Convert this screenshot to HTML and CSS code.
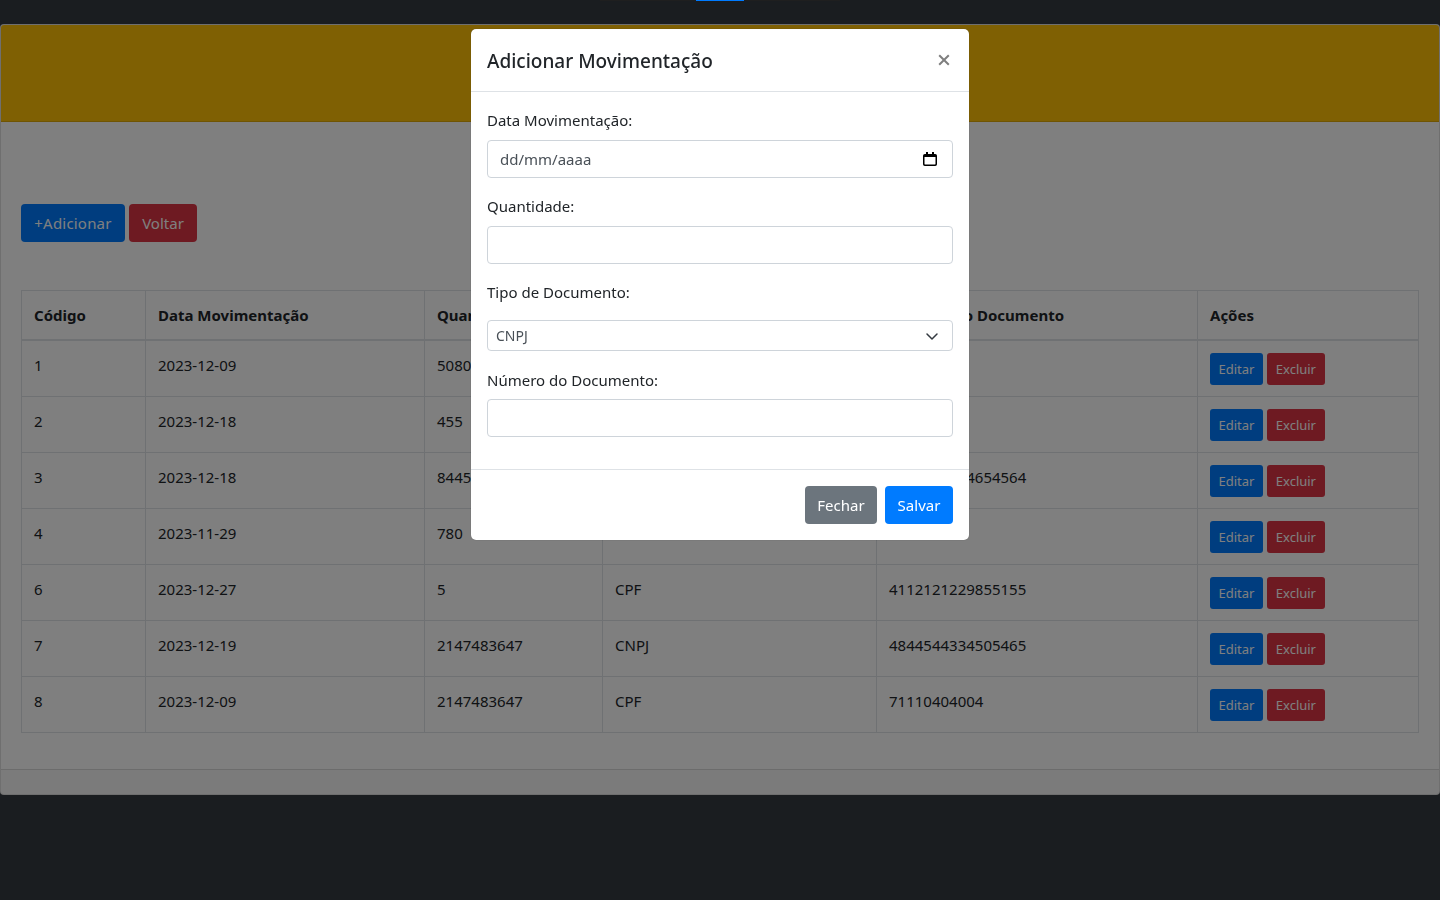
FILE: index.html
```html
<!DOCTYPE html>
<html lang="pt-BR">
<head>
<meta charset="utf-8">
<title>Movimentações</title>
<link rel="stylesheet" href="styles.css">
</head>
<body>
<div class="topbar">
  <div class="pager"><span class="pg"></span><span class="pg gap"></span><span class="pg end"></span></div>
</div>
<main class="card">
  <header class="card-header"></header>
  <section class="card-body">
    <div class="actions">
      <a class="btn blue">+Adicionar</a>
      <a class="btn red">Voltar</a>
    </div>
    <table class="grid">
      <colgroup>
        <col class="c1"><col class="c2"><col class="c3"><col class="c4"><col class="c5"><col class="c6">
      </colgroup>
      <thead>
        <tr><th>Código</th><th>Data Movimentação</th><th>Quantidade</th><th>Tipo de Documento</th><th>Número do Documento</th><th>Ações</th></tr>
      </thead>
      <tbody>
        <tr><td>1</td><td>2023-12-09</td><td>5080</td><td>CPF</td><td>1234</td><td><span class="sm blue">Editar</span> <span class="sm red">Excluir</span></td></tr>
        <tr><td>2</td><td>2023-12-18</td><td>455</td><td>CPF</td><td>4545</td><td><span class="sm blue">Editar</span> <span class="sm red">Excluir</span></td></tr>
        <tr><td>3</td><td>2023-12-18</td><td>8445</td><td>CNPJ</td><td>4654654654654564</td><td><span class="sm blue">Editar</span> <span class="sm red">Excluir</span></td></tr>
        <tr><td>4</td><td>2023-11-29</td><td>780</td><td>CPF</td><td>7805</td><td><span class="sm blue">Editar</span> <span class="sm red">Excluir</span></td></tr>
        <tr><td>6</td><td>2023-12-27</td><td>5</td><td>CPF</td><td>4112121229855155</td><td><span class="sm blue">Editar</span> <span class="sm red">Excluir</span></td></tr>
        <tr><td>7</td><td>2023-12-19</td><td>2147483647</td><td>CNPJ</td><td>4844544334505465</td><td><span class="sm blue">Editar</span> <span class="sm red">Excluir</span></td></tr>
        <tr><td>8</td><td>2023-12-09</td><td>2147483647</td><td>CPF</td><td>71110404004</td><td><span class="sm blue">Editar</span> <span class="sm red">Excluir</span></td></tr>
      </tbody>
    </table>
  </section>
  <footer class="card-footer"></footer>
</main>

<div class="backdrop"></div>
<div class="active-tab"></div>

<div class="modal">
  <div class="modal-header">
    <h5 class="modal-title">Adicionar Movimentação</h5>
    <svg class="close" width="12" height="12" viewBox="0 0 12 12" aria-label="Fechar">
      <path d="M1.2 1.2l9.6 9.6M10.8 1.2l-9.6 9.6" fill="none" stroke="#7f7f7f" stroke-width="2"/>
    </svg>
  </div>
  <div class="modal-body">
    <div class="field">
      <label class="lbl">Data Movimentação:</label>
      <div class="control date">
        <span>dd/mm/aaaa</span>
        <svg class="cal" width="14" height="14" viewBox="0 0 14 14" aria-hidden="true">
          <path d="M3 0h2v2h4V0h2v2h1.2A1.8 1.8 0 0 1 14 3.8v8.4a1.8 1.8 0 0 1-1.8 1.8H1.8A1.8 1.8 0 0 1 0 12.2V3.8A1.8 1.8 0 0 1 1.8 2H3z M1.5 5v7c0 .3.2.5.5.5h10c.3 0 .5-.2.5-.5V5z" fill="#000" fill-rule="evenodd"/>
        </svg>
      </div>
    </div>
    <div class="field">
      <label class="lbl">Quantidade:</label>
      <div class="control"></div>
    </div>
    <div class="field tipo">
      <label class="lbl">Tipo de Documento:</label>
      <div class="control select">
        <span>CNPJ</span>
        <svg width="16" height="16" viewBox="0 0 16 16" aria-hidden="true">
          <path d="M3 6l5 5 5-5" fill="none" stroke="#343a40" stroke-width="1.5" stroke-linecap="round" stroke-linejoin="round"/>
        </svg>
      </div>
    </div>
    <div class="field numero">
      <label class="lbl">Número do Documento:</label>
      <div class="control"></div>
    </div>
  </div>
  <div class="modal-footer">
    <a class="btn gray">Fechar</a>
    <a class="btn primary">Salvar</a>
  </div>
</div>
</body>
</html>
```
FILE: styles.css
```css
* { box-sizing: border-box; }

html, body { margin: 0; height: 100%; }

body {
  background: #343a40;
  color: #212529;
  font-family: "Noto Sans", "Open Sans", sans-serif;
  font-size: 15px;
  line-height: 24px;
  overflow: hidden;
}

.topbar { height: 24px; display: flex; justify-content: center; }
.pager { display: flex; height: 1px; width: 240px; }
.pg { flex: 0 0 96px; background: #3f3f3f; }
.pg.gap { flex: 0 0 48px; background: none; }
.pg.end { flex: 1 1 auto; }

.card {
  height: 771px;
  display: flex;
  flex-direction: column;
  background: #fff;
  border: 1px solid rgba(0,0,0,.125);
  border-radius: 4px;
}
.card-header { height: 97px; flex: none; background: #ffc107; border-bottom: 1px solid rgba(0,0,0,.125); border-radius: 3px 3px 0 0; }
.card-body { flex: 1 1 auto; padding: 82px 20px 0; }
.card-footer { height: 25px; flex: none; background: rgba(0,0,0,.03); border-top: 1px solid rgba(0,0,0,.125); border-radius: 0 0 3px 3px; }

.actions { display: flex; gap: 4px; height: 38px; margin-bottom: 48px; }

.btn {
  display: flex;
  align-items: center;
  justify-content: center;
  height: 38px;
  padding: 0 13px;
  border-radius: 4px;
  color: #fff;
}
.btn.blue, .sm.blue { background: #007bff; }
.btn.red, .sm.red { background: #dc3545; }
.btn.gray { background: #6c757d; width: 72px; padding: 0; }
.btn.primary { background: #007bff; width: 68px; padding: 0; }
.actions .blue { width: 104px; padding: 0 0 1px; letter-spacing: .2px; }
.actions .red { width: 68px; padding: 0 0 1px; }

.grid {
  width: 1397px;
  border-collapse: collapse;
  table-layout: fixed;
}
.c1 { width: 124px; }
.c2 { width: 279px; }
.c3 { width: 178px; }
.c4 { width: 274px; }
.c5 { width: 321px; }
.c6 { width: 221px; }

.grid th, .grid td {
  border: 1px solid #dee2e6;
  padding: 12px;
  text-align: left;
  vertical-align: top;
  white-space: nowrap;
  overflow: hidden;
}
.grid th { height: 49px; border-bottom-width: 2px; font-weight: 700; }
.grid td { height: 56px; padding-bottom: 8px; }

.sm {
  display: inline-block;
  vertical-align: top;
  height: 32px;
  width: 53px;
  border-radius: 3px;
  color: #fff;
  font-size: 13px;
  line-height: 32px;
  text-align: center;
}
.sm.red { width: 58px; }

.backdrop {
  position: fixed;
  inset: 0;
  background: rgba(0,0,0,.5);
}

.active-tab {
  position: fixed;
  left: 696px;
  top: 0;
  width: 48px;
  height: 1px;
  background: #007bff;
}

.modal {
  position: fixed;
  left: 471px;
  top: 29px;
  width: 498px;
  height: 511px;
  display: flex;
  flex-direction: column;
  background: #fff;
  border-radius: 5px;
  box-shadow: 0 0 1px rgba(0,0,0,.4);
}
.modal-header {
  height: 63px;
  flex: none;
  display: flex;
  justify-content: space-between;
  align-items: center;
  padding: 0 16px;
  border-bottom: 1px solid #dee2e6;
}
.modal-title { margin: 1px 0 0; font-size: 19px; font-weight: 500; line-height: 30px; }
.close { margin: 0 3px 0 0; }

.modal-body {
  flex: 1 1 auto;
  display: flex;
  flex-direction: column;
  padding: 16px 16px 0;
}
.field { margin-bottom: 16px; }
.field.tipo { margin-bottom: 17px; }
.lbl { display: block; height: 24px; margin-bottom: 8px; }
.numero .lbl { margin-bottom: 7px; }

.control {
  height: 38px;
  border: 1px solid #ced4da;
  border-radius: 4px;
  background: #fff;
}
.date {
  display: flex;
  align-items: center;
  justify-content: space-between;
  padding: 0 15px 0 12px;
  color: #495057;
}
.cal { margin-top: -1px; }
.select {
  height: 31px;
  margin-top: 16px;
  display: flex;
  align-items: center;
  justify-content: space-between;
  padding: 0 12px 0 8px;
  font-size: 14px;
  color: #495057;
}

.modal-footer {
  height: 71px;
  flex: none;
  display: flex;
  justify-content: flex-end;
  gap: 8px;
  padding: 16px;
  border-top: 1px solid #dee2e6;
}
```
